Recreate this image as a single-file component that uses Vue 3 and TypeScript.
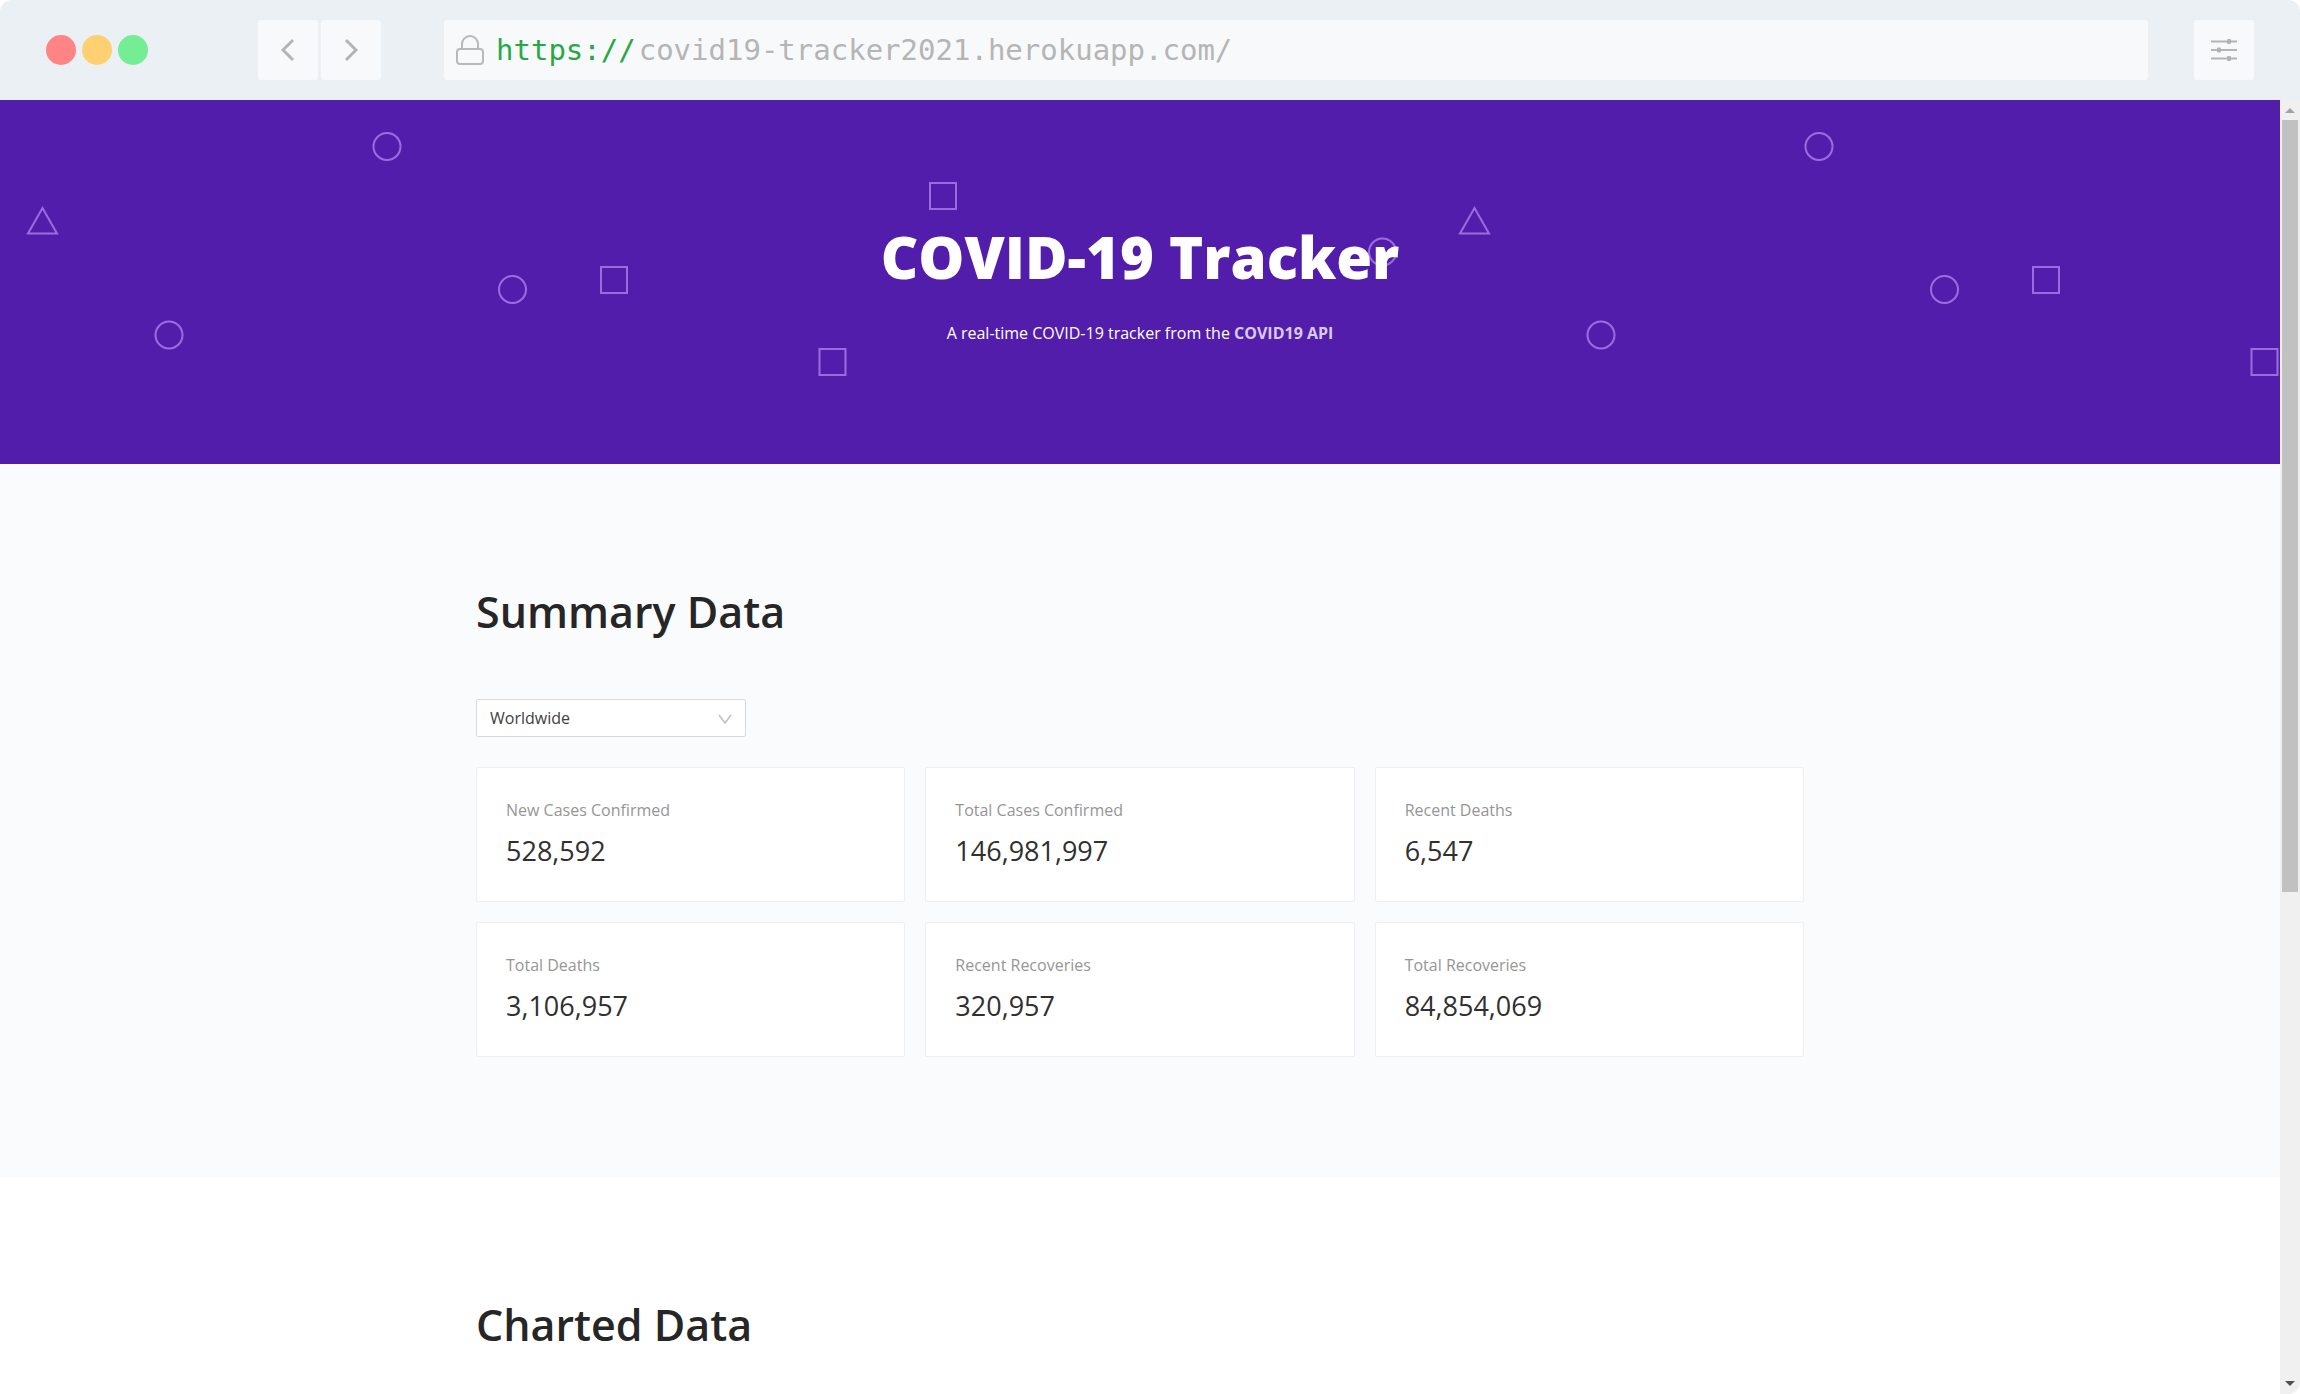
<script setup lang="ts">
import { ref } from 'vue'

interface Stat {
  label: string
  value: number
}

const address = { scheme: 'https://', rest: 'covid19-tracker2021.herokuapp.com/' }

const stats: Stat[] = [
  { label: 'New Cases Confirmed', value: 528592 },
  { label: 'Total Cases Confirmed', value: 146981997 },
  { label: 'Recent Deaths', value: 6547 },
  { label: 'Total Deaths', value: 3106957 },
  { label: 'Recent Recoveries', value: 320957 },
  { label: 'Total Recoveries', value: 84854069 },
]

const region = ref('Worldwide')
const format = (n: number): string => n.toLocaleString('en-US')
</script>

<template>
  <div class="window">
    <header class="toolbar">
      <div class="lights">
        <span class="light red"></span>
        <span class="light amber"></span>
        <span class="light green"></span>
      </div>
      <nav class="history" aria-label="History">
        <button type="button" class="tool" aria-label="Back">
          <svg width="14" height="24" viewBox="0 0 14 24"><path d="M12 2 2 12 12 22" /></svg>
        </button>
        <button type="button" class="tool" aria-label="Forward">
          <svg width="14" height="24" viewBox="0 0 14 24"><path d="M2 2 12 12 2 22" /></svg>
        </button>
      </nav>
      <div class="address">
        <svg class="lock" width="28" height="30" viewBox="0 0 28 30">
          <rect x="1" y="14" width="26" height="15" rx="3" />
          <path d="M6 14V9a8 8 0 0 1 16 0V14" />
        </svg>
        <span class="url"><span class="scheme">{{ address.scheme }}</span>{{ address.rest }}</span>
      </div>
      <button type="button" class="tool" aria-label="Settings">
        <svg width="26" height="22" viewBox="0 0 26 22" class="sliders">
          <path d="M0 2.500H26M0 11H26M0 19.500H26" />
          <rect x="16" y="0" width="4" height="5" rx="1" />
          <rect x="6" y="8.500" width="4" height="5" rx="1" />
          <rect x="16" y="17" width="4" height="5" rx="1" />
        </svg>
      </button>
    </header>

    <div class="viewport">
      <main class="page">
        <section class="hero">
          <svg class="shapes" aria-hidden="true">
            <defs>
              <pattern id="confetti" width="1432" height="364" patternUnits="userSpaceOnUse">
                <path d="M42.500 108 57 133.500H28Z" />
                <circle cx="387" cy="46.500" r="13.500" />
                <circle cx="169" cy="235" r="13.500" />
                <circle cx="512.500" cy="189.500" r="13.500" />
                <circle cx="1382.500" cy="152" r="13.500" />
                <rect x="601" y="167" width="26" height="26" />
                <rect x="930" y="83" width="26" height="26" />
                <rect x="819.500" y="249" width="26" height="26" />
              </pattern>
            </defs>
            <rect class="fill" width="100%" height="100%" />
          </svg>
          <h1>COVID-19 Tracker</h1>
          <p>A real-time COVID-19 tracker from the <a href="#">COVID19 API</a></p>
        </section>

        <section class="band tinted">
          <div class="container">
            <h2>Summary Data</h2>
            <div class="picker">
              <select v-model="region" aria-label="Region">
                <option>Worldwide</option>
              </select>
              <svg width="14" height="12" viewBox="0 0 14 12"><path d="M1 2 7 10 13 2" /></svg>
            </div>
            <div class="cards">
              <article v-for="stat in stats" :key="stat.label" class="card">
                <div class="label">{{ stat.label }}</div>
                <div class="value">{{ format(stat.value) }}</div>
              </article>
            </div>
          </div>
        </section>

        <section class="band">
          <div class="container">
            <h2>Charted Data</h2>
          </div>
        </section>
      </main>

      <div class="scrollbar" aria-hidden="true">
        <svg width="20" height="20" viewBox="0 0 20 20"><path fill="#a3a3a3" d="M10 8 15 13H5Z" /></svg>
        <div class="track"><div class="thumb"></div></div>
        <svg width="20" height="20" viewBox="0 0 20 20"><path fill="#505050" d="M5 7H15L10 12Z" /></svg>
      </div>
    </div>
  </div>
</template>

<style>
body {
  margin: 0;
  background: #fff;
}
</style>

<style scoped>
.window {
  display: flex;
  flex-direction: column;
  height: 100vh;
  overflow: hidden;
  border-radius: 12px;
  background: #fff;
  color: #262626;
  font-family: 'Open Sans', 'Noto Sans', sans-serif;
}

.toolbar {
  display: flex;
  flex: none;
  align-items: center;
  box-sizing: border-box;
  height: 100px;
  padding: 0 46px;
  background: #eaf0f3;
}

.lights {
  display: flex;
  gap: 6px;
  margin-right: 110px;
}

.light {
  width: 30px;
  height: 30px;
  border-radius: 50%;
}

.red {
  background: #ff8585;
}

.amber {
  background: #ffd071;
}

.green {
  background: #74ed94;
}

.history {
  display: flex;
  gap: 3px;
  margin-right: 63px;
}

.tool {
  display: flex;
  align-items: center;
  justify-content: center;
  width: 60px;
  height: 60px;
  padding: 0;
  border: 0;
  border-radius: 3px;
  background: #f8f9fb;
}

.tool svg {
  fill: none;
  stroke: #b4b4b4;
  stroke-width: 3;
}

.tool .sliders {
  stroke-width: 2;
}

.sliders rect {
  fill: #b4b4b4;
  stroke: none;
}

.address {
  display: flex;
  flex: 1;
  align-items: center;
  gap: 12px;
  height: 60px;
  margin-right: 46px;
  padding-left: 12px;
  border-radius: 3px;
  background: #f8f9fb;
}

.lock {
  fill: none;
  stroke: #b9b9b9;
  stroke-width: 2;
}

.url {
  color: #b5b5b5;
  font: 29px/40px 'DejaVu Sans Mono', monospace;
}

.scheme {
  margin-right: 3px;
  color: #27a844;
}

.viewport {
  display: flex;
  flex: 1;
  min-height: 0;
}

.page {
  flex: 1;
  overflow: hidden;
}

.hero {
  position: relative;
  display: flex;
  flex-direction: column;
  align-items: center;
  box-sizing: border-box;
  height: 364px;
  padding-top: 117px;
  background: #531dab;
  color: #fff;
}

.shapes {
  position: absolute;
  inset: 0;
  width: 100%;
  height: 100%;
  fill: none;
  stroke: #9c6cde;
  stroke-width: 2;
}

.shapes .fill {
  fill: url(#confetti);
  stroke: none;
}

h1 {
  position: relative;
  margin: 0 0 23px;
  font-size: 58px;
  font-weight: 800;
  line-height: 80px;
}

.hero p {
  position: relative;
  margin: 0;
  font-size: 16px;
  font-weight: 500;
  line-height: 26px;
}

.hero a {
  color: #d9cbee;
  font-weight: 700;
  text-decoration: none;
}

.band {
  padding: 120px 0;
}

.tinted {
  background: #fafbfd;
}

.container {
  max-width: 1328px;
  margin: 0 auto;
}

h2 {
  margin: 0 0 59px;
  font-size: 43px;
  font-weight: 600;
  line-height: 56px;
}

.picker {
  position: relative;
  width: 270px;
  margin-bottom: 30px;
}

.picker select {
  display: block;
  box-sizing: border-box;
  width: 100%;
  height: 38px;
  padding: 0 13px;
  appearance: none;
  border: 1px solid #d9d9d9;
  border-radius: 2px;
  background: #fff;
  color: #404040;
  font: 16px/26px 'Open Sans', 'Noto Sans', sans-serif;
}

.picker svg {
  position: absolute;
  top: 14px;
  right: 14px;
  fill: none;
  stroke: #bfbfbf;
  stroke-width: 1.5;
  pointer-events: none;
}

.cards {
  display: grid;
  grid-template-columns: repeat(3, 1fr);
  gap: 20px;
}

.card {
  padding: 29px;
  padding-bottom: 28px;
  border: 1px solid #f0f0f0;
  border-radius: 2px;
  background: #fff;
}

.label {
  margin-bottom: 5px;
  color: #969696;
  font-size: 16px;
  line-height: 26px;
}

.value {
  color: #303030;
  font-size: 27px;
  line-height: 45px;
}

.scrollbar {
  display: flex;
  flex-direction: column;
  width: 20px;
  background: #f0f0f0;
}

.track {
  flex: 1;
  padding: 0 2px;
}

.thumb {
  height: 61.6%;
  background: #c1c1c1;
}
</style>
